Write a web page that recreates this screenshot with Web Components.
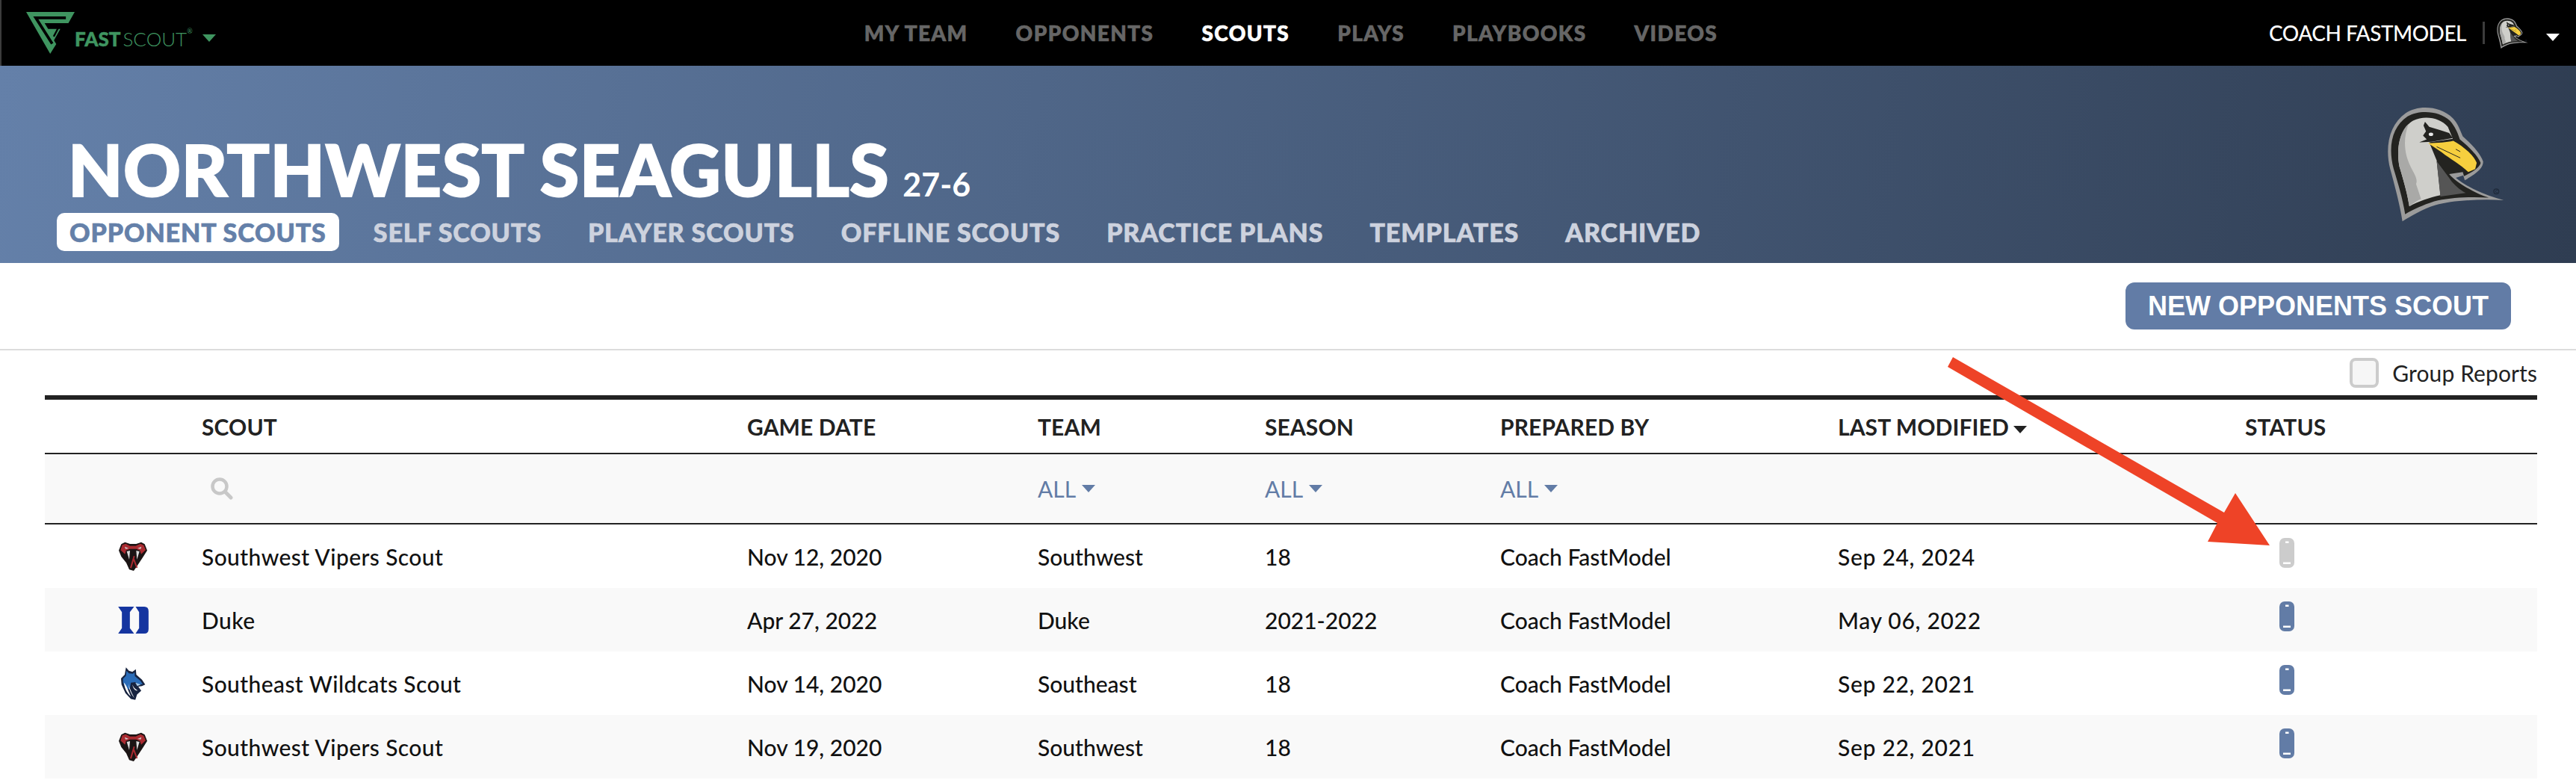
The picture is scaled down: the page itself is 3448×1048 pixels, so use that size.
<!DOCTYPE html>
<html>
<head>
<meta charset="utf-8">
<title>FastScout</title>
<style>
  html, body { margin: 0; background: #fff; }
  body { width: 3448px; height: 1048px; overflow: hidden; position: relative; font-family: Lato, "Open Sans", sans-serif; }
</style>
</head>
<body>
<fs-topbar></fs-topbar>
<team-header name="NORTHWEST SEAGULLS" record="27-6"></team-header>
<scout-toolbar label="NEW OPPONENTS SCOUT"></scout-toolbar>
<scout-table>
  <scout-row logo="viper" name="Southwest Vipers Scout" date="Nov 12, 2020" team="Southwest" season="18" by="Coach FastModel" modified="Sep 24, 2024" status="off"></scout-row>
  <scout-row logo="duke" name="Duke" date="Apr 27, 2022" team="Duke" season="2021-2022" by="Coach FastModel" modified="May 06, 2022" status="on"></scout-row>
  <scout-row logo="wildcat" name="Southeast Wildcats Scout" date="Nov 14, 2020" team="Southeast" season="18" by="Coach FastModel" modified="Sep 22, 2021" status="on"></scout-row>
  <scout-row logo="viper" name="Southwest Vipers Scout" date="Nov 19, 2020" team="Southwest" season="18" by="Coach FastModel" modified="Sep 22, 2021" status="on"></scout-row>
</scout-table>
<red-arrow></red-arrow>

<script>
const LOGOS = {
  seagull: `<svg viewBox="735 430 472 462" width="100%" height="100%">
    <path fill="#9b9b9b" d="M797 890 C790 840 770 760 748 680 C725 590 745 500 810 455 C860 420 950 425 1000 475 C1020 495 1030 525 1040 548 C1075 580 1110 615 1122 650 C1122 675 1100 695 1048 725 L1042 705 L1012 715 C1060 755 1130 785 1205 805 C1110 800 1000 805 930 825 C880 840 830 870 797 890Z"/>
    <path fill="#232320" d="M808 862 C800 810 785 755 762 680 C738 590 755 510 818 468 C865 440 945 445 988 485 C1010 510 1020 535 1028 560 C1065 590 1100 625 1112 655 C1108 672 1085 690 1045 708 L1040 692 L985 700 C1010 730 1080 775 1145 795 C1070 790 985 795 925 810 C880 825 840 842 808 862Z"/>
    <path fill="#cfcfcb" d="M825 830 C815 770 800 720 785 670 C770 590 790 515 840 485 C890 462 950 475 980 510 L1000 558 L905 572 L935 645 L950 785 C905 795 860 810 825 830Z"/>
    <path fill="#a9a9a7" d="M825 830 C815 770 800 720 785 670 C772 600 785 530 822 498 C798 560 805 620 830 670 C845 700 860 720 852 740 L872 800 C855 808 840 818 825 830Z"/>
    <path fill="#555" d="M935 648 L985 715 C1000 740 1030 765 1052 776 L950 790Z"/>
    <path fill="#f6cf3e" d="M900 575 C940 575 975 572 1002 566 C1045 590 1085 625 1096 655 L1090 680 L1062 692 C1030 660 990 640 955 612Z"/>
    <path fill="#232320" d="M888 490 L905 510 L945 522 L985 535 L1000 555 L915 570 L865 572 L895 560 L880 545 L892 528 L882 505Z"/>
    <ellipse cx="912" cy="540" rx="9" ry="7" fill="#e8e8e8"/>
    <path fill="none" stroke="#232320" stroke-width="3" d="M935 590 L1030 635 M1012 600 L1030 610"/>
    <circle cx="1175" cy="770" r="10" fill="none" stroke="#1f2a3a" stroke-width="4"/>
    <path fill="none" stroke="#1f2a3a" stroke-width="3" d="M1180 766 A5 5 0 1 0 1180 774"/>
  </svg>`,
  viper: `<svg viewBox="0 0 114 117" width="38" height="39">
    <path fill="#1b1414" d="M10 10 L25 2 L45 9 L70 9 L90 2 L104 10 L114 35 L95 65 L75 95 L60 117 L42 112 L30 85 L10 60 L0 35Z"/>
    <path fill="#a92a30" d="M14 13 L28 8 L45 17 L68 17 L87 8 L100 14 L108 33 L90 50 L85 36 L70 29 H45 L29 35 L25 50 L7 34Z"/>
    <path fill="#ddd" d="M32 39 L45 36 L42 72Z M83 39 L70 36 L73 72Z"/>
    <path fill="#cfcfcf" d="M24 20 L40 27 L27 29Z M91 20 L75 27 L88 29Z"/>
    <path fill="none" stroke="#a92a30" stroke-width="6" d="M62 58 L48 106 M60 70 L73 105"/>
  </svg>`,
  duke: `<svg viewBox="0 0 122 108" width="41" height="36">
    <path fill="#1535a0" d="M0 0 H64 L47 22 V86 L64 108 H0 L15 86 V22Z M70 0 H105 Q122 0 122 18 V90 Q122 108 105 108 H70 L84 86 V22Z"/>
  </svg>`,
  wildcat: `<svg viewBox="0 0 100 132" width="33" height="44">
    <path fill="#17233f" d="M20 0 L32 14 L46 18 L60 8 L62 30 L85 50 L98 70 L85 76 L70 78 L82 95 L65 110 L58 132 L40 128 L18 105 L2 70 L0 45 L15 30Z"/>
    <path fill="#2a6cb8" d="M22 14 L32 24 L48 26 L55 20 L56 36 L78 54 L88 68 L68 70 L58 60 L40 62 L35 90 L20 85 L8 62 L8 46 L20 34Z"/>
    <path fill="#fff" d="M12 62 C22 72 28 90 40 118 C28 108 14 88 12 62Z M30 66 C34 84 42 100 54 124 C44 112 32 92 30 66Z M46 70 C52 84 58 88 68 94 C58 96 50 88 46 70Z"/>
    <path fill="#a9cbe8" d="M58 62 L80 70 L66 76Z"/>
  </svg>`
};

const LABEL_FONT = `Lato, "Open Sans", sans-serif`;

function caret(w, h, color) {
  return `<svg width="${w}" height="${h}" viewBox="0 0 18 10"><path fill="${color}" d="M0 0 H18 L9 10Z"/></svg>`;
}

class TeamLogo extends HTMLElement {
  connectedCallback() {
    this.attachShadow({ mode: 'open' });
    this.shadowRoot.innerHTML = `
      <style>:host { display: inline-flex; line-height: 0; }</style>
      ${LOGOS[this.getAttribute('kind')]}
    `;
  }
}
customElements.define('team-logo', TeamLogo);

class FsTopbar extends HTMLElement {
  connectedCallback() {
    this.attachShadow({ mode: 'open' });
    const items = ['MY TEAM', 'OPPONENTS', 'SCOUTS', 'PLAYS', 'PLAYBOOKS', 'VIDEOS'];
    this.shadowRoot.innerHTML = `
      <style>
        :host { display: grid; grid-template-columns: 1fr auto 1fr; align-items: center; height: 88px; background: #000; box-sizing: border-box; border-left: 2px solid #3c3c3c; font-family: ${LABEL_FONT}; }
        .brand { display: flex; align-items: center; padding-left: 33px; color: #3f9560; }
        .word { font-size: 26px; line-height: 28px; margin-left: 0; padding-top: 16px; white-space: nowrap; }
        .word b { font-weight: 900; margin-right: 3px; -webkit-text-stroke: 0.5px #3f9560; }
        .word span { font-weight: 300; }
        .word sup { font-size: 9px; vertical-align: 17px; line-height: 0; }
        .brand .down { margin: 14px 0 0 13px; line-height: 0; }
        nav { display: flex; gap: 64px; margin-left: 6px; font-size: 28px; font-weight: 900; color: #666; letter-spacing: 1.4px; -webkit-text-stroke: 0.7px; }
        nav .on { color: #fff; }
        .me { display: flex; align-items: center; justify-content: flex-end; color: #fff; font-size: 28px; font-weight: 500; letter-spacing: -0.5px; }
        .rule { width: 3px; height: 30px; background: #3d3d3d; margin: 0 16px 0 22px; }
        .me team-logo { width: 42px; height: 43px; }
        .me .down { line-height: 0; margin: 10px 22px 0 24px; }
      </style>
      <div class="brand">
        <svg width="65" height="56" viewBox="105 53 192 165">
          <path fill="#3f9560" d="M105 53 H297 L272 97 H178 L192 120 H240 L215 165 L224 180 L200 218Z"/>
          <path fill="none" stroke="#000" stroke-width="11" d="M262 76 H143 L208 178"/>
          <path fill="none" stroke="#000" stroke-width="7" d="M193 112 H234 L214 150"/>
        </svg>
        <div class="word"><b>FAST</b><span>SCOUT</span><sup>®</sup></div>
        <div class="down">${caret(18, 10, '#3f9560')}</div>
      </div>
      <nav>${items.map(i => `<span class="${i === 'SCOUTS' ? 'on' : ''}">${i}</span>`).join('')}</nav>
      <div class="me">
        <span>COACH FASTMODEL</span>
        <i class="rule"></i>
        <team-logo kind="seagull"></team-logo>
        <div class="down">${caret(18, 10, '#fff')}</div>
      </div>
    `;
  }
}
customElements.define('fs-topbar', FsTopbar);

class TeamHeader extends HTMLElement {
  connectedCallback() {
    this.attachShadow({ mode: 'open' });
    const tabs = ['OPPONENT SCOUTS', 'SELF SCOUTS', 'PLAYER SCOUTS', 'OFFLINE SCOUTS', 'PRACTICE PLANS', 'TEMPLATES', 'ARCHIVED'];
    this.shadowRoot.innerHTML = `
      <style>
        :host { display: flex; justify-content: space-between; align-items: center; height: 264px; box-sizing: border-box; padding: 0 96px 0 76px; background: linear-gradient(97deg, #6480a9 0%, #4f6688 40%, #2f3d52 100%); font-family: ${LABEL_FONT}; }
        .left { align-self: flex-start; padding-top: 88px; }
        h1 { margin: 0 0 0 15px; display: flex; align-items: baseline; gap: 18px; font-size: 95px; line-height: 100px; font-weight: 900; color: #fff; letter-spacing: 0.6px; white-space: nowrap; -webkit-text-stroke: 2px #fff; }
        h1 small { font-size: 43px; font-weight: 700; letter-spacing: 0; -webkit-text-stroke: 0; }
        .tabs { display: flex; gap: 32px; margin-top: -12px; font-size: 34px; line-height: 51px; font-weight: 900; color: #cdd2de; letter-spacing: 0.9px; -webkit-text-stroke: 0.7px; }
        .tabs span { padding: 0 15px; }
        .tabs .on { background: #fff; color: #6480a9; border-radius: 10px; padding: 0 17px; margin-right: -1px; }
        team-logo { width: 157px; height: 154px; }
      </style>
      <div class="left">
        <h1>${this.getAttribute('name')} <small>${this.getAttribute('record')}</small></h1>
        <div class="tabs">${tabs.map((t, i) => `<span class="${i === 0 ? 'on' : ''}">${t}</span>`).join('')}</div>
      </div>
      <team-logo kind="seagull"></team-logo>
    `;
  }
}
customElements.define('team-header', TeamHeader);

class ScoutToolbar extends HTMLElement {
  connectedCallback() {
    this.attachShadow({ mode: 'open' });
    this.shadowRoot.innerHTML = `
      <style>
        :host { display: block; font-family: ${LABEL_FONT}; }
        .bar { display: flex; justify-content: flex-end; height: 117px; box-sizing: border-box; padding: 26px 87px 0 0; border-bottom: 2px solid #dcdcdc; }
        button { width: 516px; height: 63px; border: 0; border-radius: 12px; background: #627ca6; color: #fff; font: bold 36px "Liberation Sans", Arial, sans-serif; padding: 0; }
        .group { display: flex; justify-content: flex-end; align-items: center; gap: 18px; height: 60px; padding-right: 52px; font-size: 30px; color: #222; letter-spacing: 0.1px; }
        .check { width: 39px; height: 40px; box-sizing: border-box; border: 4px solid #ccc; border-radius: 8px; background: #f6f6f6; }
      </style>
      <div class="bar"><button>${this.getAttribute('label')}</button></div>
      <div class="group"><span class="check"></span><span>Group Reports</span></div>
    `;
  }
}
customElements.define('scout-toolbar', ScoutToolbar);

const COLUMNS = '210px 730px 389px 304px 315px 452px 545px 391px';

class ScoutTable extends HTMLElement {
  connectedCallback() {
    this.attachShadow({ mode: 'open' });
    const filter = `<span class="all">ALL ${caret(18, 10, '#627ca6')}</span>`;
    this.shadowRoot.innerHTML = `
      <style>
        :host { display: block; margin: 0 52px 0 60px; font-family: ${LABEL_FONT}; font-size: 30px; }
        .head, .filter { display: grid; grid-template-columns: ${COLUMNS}; align-items: center; }
        .head { height: 71px; border-top: 6px solid #222; border-bottom: 2px solid #222; font-weight: 700; color: #222; letter-spacing: 0.1px; }
        .head svg { margin-left: 6px; vertical-align: 3px; }
        .filter { height: 92px; background: #f9f9f9; border-bottom: 2px solid #222; }
        .filter svg.find { margin-left: 12px; display: block; }
        .all { color: #627ca6; display: inline-flex; align-items: center; gap: 8px; }
        ::slotted(scout-row:nth-of-type(even)) { background: #f9f9f9; }
      </style>
      <div class="head">
        <span></span><span>SCOUT</span><span>GAME DATE</span><span>TEAM</span><span>SEASON</span><span>PREPARED BY</span>
        <span>LAST MODIFIED${caret(18, 10, '#222')}</span><span>STATUS</span>
      </div>
      <div class="filter">
        <span></span>
        <svg class="find" width="30" height="30" viewBox="0 0 30 30"><circle cx="12" cy="12" r="9.5" fill="none" stroke="#c8c8c8" stroke-width="4.5"/><path d="M19 19 L27 27" stroke="#c8c8c8" stroke-width="5" stroke-linecap="round"/></svg>
        <span></span><span>${filter}</span><span>${filter}</span><span>${filter}</span><span></span><span></span>
      </div>
      <slot></slot>
    `;
  }
}
customElements.define('scout-table', ScoutTable);

class ScoutRow extends HTMLElement {
  connectedCallback() {
    this.attachShadow({ mode: 'open' });
    const a = n => this.getAttribute(n);
    const fill = a('status') === 'on' ? '#627ca6' : '#cccccc';
    this.shadowRoot.innerHTML = `
      <style>
        :host { display: grid; grid-template-columns: ${COLUMNS}; align-items: center; height: 85px; color: #111; font-weight: 500; }
        .logo { display: flex; justify-content: center; width: 116px; margin-left: 60px; }
        .name { letter-spacing: 0.4px; }
        .mod { letter-spacing: 0.7px; }
        .status { margin: -9px 0 0 46px; line-height: 0; }
      </style>
      <div class="logo"><team-logo kind="${a('logo')}"></team-logo></div>
      <span class="name">${a('name')}</span><span>${a('date')}</span><span>${a('team')}</span><span>${a('season')}</span><span>${a('by')}</span><span class="mod">${a('modified')}</span>
      <div class="status"><svg width="20" height="40" viewBox="0 0 20 40"><rect width="20" height="40" rx="7" fill="${fill}"/><rect x="8" y="4.5" width="4.5" height="2.5" fill="#fff"/><rect x="5" y="32.5" width="10" height="2.5" fill="#fff"/></svg></div>
    `;
  }
}
customElements.define('scout-row', ScoutRow);

// annotation drawn over the page
class RedArrow extends HTMLElement {
  connectedCallback() {
    this.attachShadow({ mode: 'open' });
    this.shadowRoot.innerHTML = `
      <style>:host { position: absolute; left: 0; top: 0; width: 3448px; height: 1048px; pointer-events: none; }</style>
      <svg width="3448" height="1048"><polygon fill="#ee4327" points="2614,478 2977,686 2992,660 3038,730 2955,725 2968,700 2607,491"/></svg>
    `;
  }
}
customElements.define('red-arrow', RedArrow);
</script>
</body>
</html>
